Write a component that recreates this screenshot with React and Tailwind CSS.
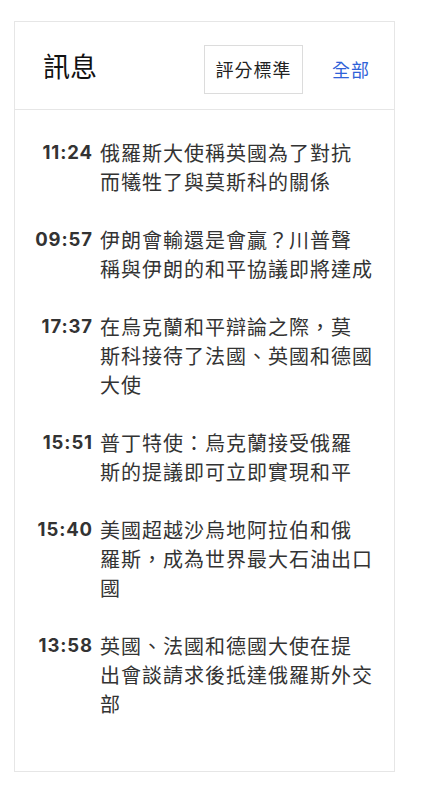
import React from "react";

const items = [
  { t: "11:24", lines: ["俄羅斯大使稱英國為了對抗", "而犧牲了與莫斯科的關係"] },
  { t: "09:57", lines: ["伊朗會輸還是會贏？川普聲", "稱與伊朗的和平協議即將達成"] },
  { t: "17:37", lines: ["在烏克蘭和平辯論之際，莫", "斯科接待了法國、英國和德國", "大使"] },
  { t: "15:51", lines: ["普丁特使：烏克蘭接受俄羅", "斯的提議即可立即實現和平"] },
  { t: "15:40", lines: ["美國超越沙烏地阿拉伯和俄", "羅斯，成為世界最大石油出口", "國"] },
  { t: "13:58", lines: ["英國、法國和德國大使在提", "出會談請求後抵達俄羅斯外交", "部"] },
];

export default function App() {
  return (
    <div className="min-h-[800px] w-[424px] bg-white pl-[14px] pt-[21px] font-['Noto_Sans_CJK_TC',sans-serif]">
      <div className="w-[381px] h-[751px] border border-[#e6e6e6] bg-white">
        <div className="flex h-[88px] items-center border-b border-[#e6e6e6] pl-[28px] pr-[24px]">
          <h2 className="text-[27px] leading-none text-[#111] font-normal">訊息</h2>
          <div className="ml-auto mt-[8px] flex items-center">
            <button className="h-[49px] w-[99px] border border-[#dcdcdc] bg-white text-[18px] tracking-[1px] text-[#222]">
              評分標準
            </button>
            <span className="ml-[29px] text-[18px] tracking-[1px] text-[#2f62d8]">全部</span>
          </div>
        </div>
        <div className="flex flex-col gap-[29px] pt-[28px]">
          {items.map((it) => (
            <div key={it.t} className="flex">
              <div className="w-[78px] shrink-0 text-right font-['Inter',sans-serif] text-[18.5px] font-bold leading-[29px] tracking-[0.9px] text-[#333]">
                {it.t}
              </div>
              <div className="ml-[7px] text-[20px] leading-[29px] tracking-[1px] text-[#333] whitespace-nowrap">
                {it.lines.map((l, i) => (
                  <div key={i}>{l}</div>
                ))}
              </div>
            </div>
          ))}
        </div>
      </div>
    </div>
  );
}
